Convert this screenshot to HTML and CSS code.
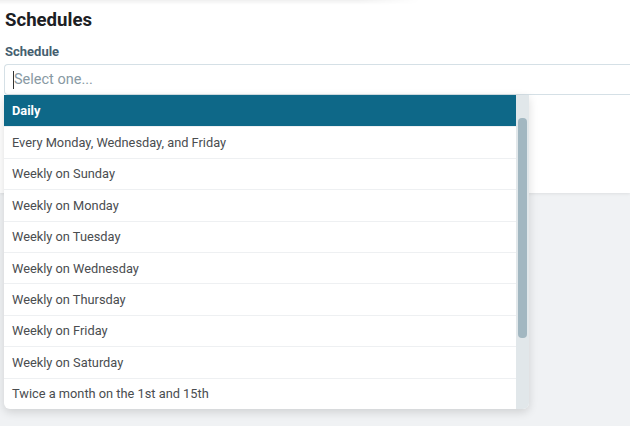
FILE: index.html
```html
<!DOCTYPE html>
<html>
<head>
<meta charset="utf-8">
<link rel="stylesheet" href="styles.css">
</head>
<body>
<div class="page">
  <div class="card">
    <div class="top-shade"></div>
    <h1 class="title">Schedules</h1>
    <label class="label">Schedule</label>
    <div class="input"><span class="caret"></span><span class="placeholder">Select one...</span></div>
  </div>
  <div class="dropdown">
    <ul class="options">
      <li class="option active">Daily</li>
      <li class="option">Every Monday, Wednesday, and Friday</li>
      <li class="option">Weekly on Sunday</li>
      <li class="option">Weekly on Monday</li>
      <li class="option">Weekly on Tuesday</li>
      <li class="option">Weekly on Wednesday</li>
      <li class="option">Weekly on Thursday</li>
      <li class="option">Weekly on Friday</li>
      <li class="option">Weekly on Saturday</li>
      <li class="option">Twice a month on the 1st and 15th</li>
    </ul>
    <div class="scrollbar"><div class="thumb"></div></div>
  </div>
</div>
</body>
</html>
```
FILE: styles.css
```css
html, body {
  margin: 0;
  padding: 0;
}
body {
  background: #f0f2f4;
  font-family: Roboto, "Liberation Sans", sans-serif;
  width: 630px;
  height: 426px;
  overflow: hidden;
}
.page {
  position: relative;
  height: 426px;
}
.card {
  background: #ffffff;
  height: 193px;
  box-shadow: 0 1px 3px rgba(0,0,0,0.08);
  padding: 0 0 0 4px;
  box-sizing: border-box;
}
.top-shade {
  height: 5px;
  width: 420px;
  margin-left: -4px;
  background: linear-gradient(to bottom, rgba(0,0,0,0.06), rgba(0,0,0,0));
  -webkit-mask-image: linear-gradient(to right, #000 85%, transparent);
  mask-image: linear-gradient(to right, #000 85%, transparent);
}
.title {
  margin: 3px 0 0 1px;
  font-size: 18.6px;
  font-weight: 700;
  color: #1c2024;
  line-height: 24px;
}
.label {
  display: block;
  margin: 12px 0 0 1px;
  font-size: 13px;
  font-weight: 700;
  color: #45606f;
  line-height: 16px;
}
.input {
  margin-top: 4px;
  height: 31px;
  border: 1px solid #d5e0e6;
  border-right: none;
  border-radius: 4px 0 0 4px;
  box-sizing: border-box;
  display: flex;
  align-items: center;
  padding-left: 8px;
}
.caret {
  width: 1px;
  height: 18px;
  background: #333;
}
.placeholder {
  font-size: 14.5px;
  color: #8899a3;
}
.dropdown {
  position: absolute;
  left: 4px;
  top: 95px;
  width: 525px;
  display: flex;
  background: #ffffff;
  border-radius: 0 0 6px 6px;
  box-shadow: 0 3px 10px rgba(0,0,0,0.14);
  overflow: hidden;
}
.options {
  list-style: none;
  margin: 0;
  padding: 0;
  flex: 1;
}
.option {
  height: 31.4px;
  box-sizing: border-box;
  display: flex;
  align-items: center;
  padding-left: 8px;
  font-size: 12.8px;
  color: #4a4d50;
  border-top: 1px solid #eef0f2;
}
.option.active {
  border-top: none;
  background: #0e6888;
  color: #ffffff;
  font-weight: 700;
}
.scrollbar {
  width: 13px;
  background: #e1e7ea;
  padding-top: 23px;
  box-sizing: border-box;
}
.thumb {
  width: 9px;
  margin-left: 2px;
  height: 220px;
  border-radius: 4px;
  background: #a2b7c1;
}
```
